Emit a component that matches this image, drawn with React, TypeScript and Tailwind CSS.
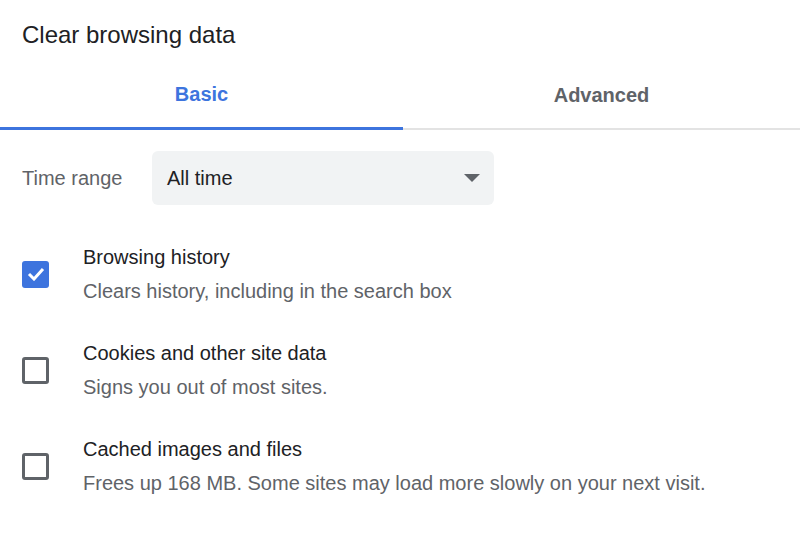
const font = { fontFamily: '"Liberation Sans", Arial, sans-serif' }

const items = [
  { title: 'Browsing history', desc: 'Clears history, including in the search box', checked: true },
  { title: 'Cookies and other site data', desc: 'Signs you out of most sites.', checked: false },
  { title: 'Cached images and files', desc: 'Frees up 168 MB. Some sites may load more slowly on your next visit.', checked: false },
]

export default function App() {
  return (
    <div className="w-[800px] h-[541px] bg-white text-[#202124] overflow-hidden" style={font}>
      <h1 className="pl-[22px] pt-[18px] text-[24px] leading-[34px]">Clear browsing data</h1>

      {/* tabs */}
      <div className="flex mt-[10px] border-b-2 border-[#e3e3e3]">
        <div className="w-[403px] h-[68px] flex items-center justify-center text-[20px] font-bold text-[#3d74de] border-b-[3px] border-[#3d74de] -mb-[2px] pb-[2px]">
          Basic
        </div>
        <div className="flex-1 h-[66px] flex items-center justify-center text-[20px] font-bold text-[#5f6368]">
          Advanced
        </div>
      </div>

      {/* time range */}
      <div className="flex items-center pl-[22px] mt-[21px]">
        <span className="text-[20px] text-[#5f6368] w-[130px]">Time range</span>
        <div className="w-[342px] h-[54px] bg-[#f1f3f4] rounded-md flex items-center justify-between pl-[15px] pr-[14px]">
          <span className="text-[20px]">All time</span>
          <svg width="16" height="8" viewBox="0 0 16 8"><path d="M0 0h16L8 8z" fill="#5f6368" /></svg>
        </div>
      </div>

      {/* options */}
      <div className="mt-[38px] flex flex-col gap-[34px]">
        {items.map((it) => (
          <div key={it.title} className="flex items-center pl-[22px]">
            {it.checked ? (
              <div className="w-[27px] h-[27px] rounded-[3px] bg-[#3d74de] flex items-center justify-center">
                <svg width="18" height="14" viewBox="0 0 18 14"><path d="M2 7l5 5 9-10" stroke="#fff" strokeWidth="3" fill="none" /></svg>
              </div>
            ) : (
              <div className="w-[27px] h-[27px] rounded-[3px] border-[3px] border-[#5f6368]" />
            )}
            <div className="ml-[34px]">
              <div className="text-[20px] leading-[28px]">{it.title}</div>
              <div className="text-[20px] leading-[28px] text-[#5f6368] mt-[6px]">{it.desc}</div>
            </div>
          </div>
        ))}
      </div>
    </div>
  )
}
